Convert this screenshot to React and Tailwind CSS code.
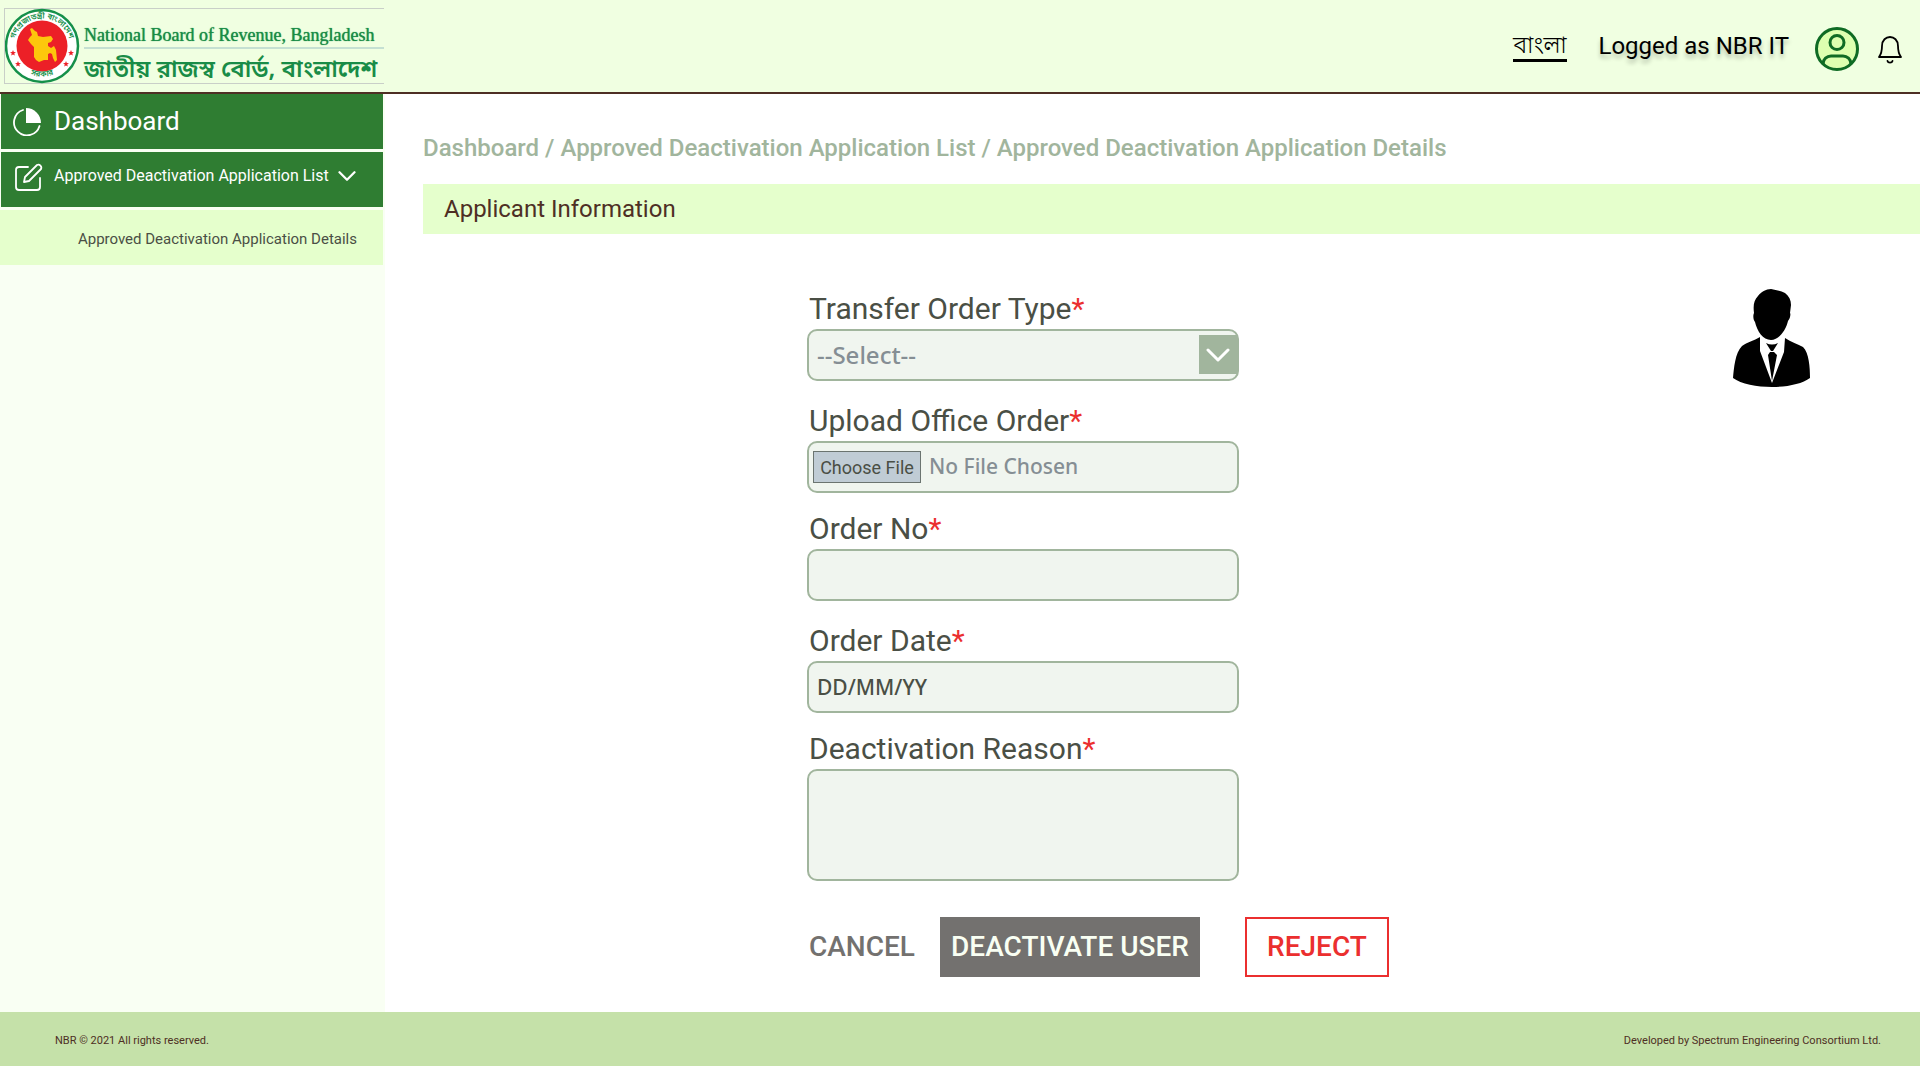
import React, { useState } from "react";

const Emblem = () => (
  <svg viewBox="1 0 76 76" className="w-[76px] h-[76px] shrink-0" aria-hidden="true">
    <defs>
      <path id="sealTop" d="M12.500 50 A28 28 0 1 1 63.500 50" />
      <path id="sealBottom" d="M20 63 A32 32 0 0 0 56 63" />
    </defs>
    <circle cx="38" cy="38" r="36" fill="#fff" stroke="#15904a" strokeWidth="2.5" />
    <circle cx="38" cy="38" r="25.500" fill="#ec2027" />
    <path
      d="M26 21l2-1 3 3 2 1 1 4 5 1 8-1 2 3-2 3-3 1 0 3 3 2 3-2 2 4 1 10-2 2-2-4-1-4-2-1-2 1 0 6-4 0-5 2-3-2-2-3 0-10-3-3-3-4 2-3 2-2z"
      fill="#fdc70c"
    />
    <g fill="#15904a" fontSize="8" fontWeight="600" fontFamily="Noto Sans Bengali, Noto Sans, sans-serif">
      <text>
        <textPath href="#sealTop" startOffset="50%" textAnchor="middle">গণপ্রজাতন্ত্রী বাংলাদেশ</textPath>
      </text>
      <text>
        <textPath href="#sealBottom" startOffset="50%" textAnchor="middle">সরকার</textPath>
      </text>
    </g>
    <g fill="#ec2027">
      {[[9, 45], [14, 56], [67, 45], [62, 56]].map(([x, y]) => (
        <path key={`${x}-${y}`} transform={`translate(${x} ${y})`} d="M0-3l.8 2.1 2.2.1-1.8 1.3.7 2.1L0 1.4l-1.9 1.2.7-2.1L-3-.8l2.2-.1z" />
      ))}
    </g>
  </svg>
);

const Businessman = () => (
  <svg viewBox="0 0 77 98" className="w-[77px] h-[98px]" role="img" aria-label="Applicant">
    <path d="M21 24c-1-8 0-13 4-17 3-4 8-7 13-7 5 1 10 2 14 4 4 3 6 7 6 12l-1 8c1 1 0 6-2 8-2 9-9 19-17 19s-14-9-16-18c-2-2-2-7-1-9z" />
    <path d="M27 48v14l12 32 12-31 1-14c6 4 13 6 18 9 6 6 7 20 7 31-8 6-23 9-38 9S8 95 0 89C1 79 2 64 9 57c5-4 12-5 18-9z" />
    <path d="M33 54c4 2 8 2 12 0l-5 8h-2zM37 63h4l3 3-5 26-4-26z" />
  </svg>
);

const Chevron = ({ className }) => (
  <svg viewBox="0 0 24 14" className={className} fill="none" stroke="currentColor" strokeWidth="3" strokeLinecap="round" strokeLinejoin="round" aria-hidden="true">
    <path d="M2 2l10 10L22 2" />
  </svg>
);

const Header = () => (
  <header className="h-[94px] flex justify-between items-center bg-[#f0ffe1] border-b-2 border-[#4e2f24]">
    <div className="ml-1 h-[76px] w-[380px] flex items-center border-y border-l border-[#c9cfc8]">
      <Emblem />
      <div className="flex-1 pt-3 pl-[3px] text-[#198c47]">
        <p className="pt-2 font-['Liberation_Serif',serif] text-[18px] leading-6 whitespace-nowrap border-b-2 border-[#c5e0d2] [text-shadow:0_0_1px_currentColor]">
          National Board of Revenue, Bangladesh
        </p>
        <p className="pt-1 font-['Noto_Sans_Bengali','Noto_Sans',sans-serif] font-semibold text-[24px] leading-9 whitespace-nowrap">
          জাতীয় রাজস্ব বোর্ড, বাংলাদেশ
        </p>
      </div>
    </div>

    <div className="flex items-center pr-[18px]">
      <a href="#bangla" className="text-[24px] leading-7 font-light border-b-[3px] border-black mr-8">
        বাংলা
      </a>
      <span className="text-[24px] leading-7 mr-[26px] [text-shadow:0_4px_4px_rgba(0,0,0,0.25)]">
        Logged as NBR IT
      </span>
      <button aria-label="Profile" className="mt-1.5 mr-[19px]">
        <svg viewBox="0 0 44 44" className="w-11 h-11" fill="#ddffb0" stroke="#0f6b24" strokeWidth="3">
          <circle cx="22" cy="22" r="20.5" />
          <circle cx="22" cy="15.500" r="7" />
          <path d="M8 37c0-5 4-8 8-8h12c4 0 8 3 8 8" fill="none" />
        </svg>
      </button>
      <button aria-label="Notifications" className="mt-2">
        <svg viewBox="0 0 24 28" className="w-6 h-7" fill="none" stroke="#000" strokeWidth="1.8" strokeLinecap="round" strokeLinejoin="round">
          <path d="M1 21c3-4 3-7 3-11 0-6 4-9 8-9s8 3 8 9c0 4 0 7 3 11z" />
          <path d="M9.500 25c.5 2.200 4.500 2.200 5 0" />
        </svg>
      </button>
    </div>
  </header>
);

const Sidebar = () => (
  <nav className="w-[385px] shrink-0 bg-[#f9fff3] pr-0.5">
    <a href="#dashboard" className="ml-px h-[55px] flex items-center bg-[#2f7d32] text-white text-[26px] pl-3">
      <svg viewBox="0 0 28 28" className="w-7 h-7 mr-[13px]" aria-hidden="true">
        <path d="M10 2a13 13 0 1 0 16.500 16" fill="none" stroke="#fff" strokeWidth="1.800" strokeLinecap="round" />
        <path d="M13 0a15 15 0 0 1 15 15H13z" fill="#fff" />
      </svg>
      Dashboard
    </a>
    <button className="mt-[3px] ml-px w-[382px] h-[55px] flex items-center bg-[#2f7d32] text-white text-[16px] pl-[14px]">
      <svg viewBox="0 0 28 28" className="w-7 h-7 mr-[11px] mb-1.5" fill="none" stroke="#fff" strokeWidth="1.800" strokeLinecap="round" strokeLinejoin="round" aria-hidden="true">
        <path d="M13 4H4a3 3 0 0 0-3 3v17a3 3 0 0 0 3 3h18a3 3 0 0 0 3-3v-9" />
        <path d="M22 2a3 3 0 0 1 4 4L14 18l-5 1 1-5z" />
      </svg>
      <span className="pb-2">Approved Deactivation Application List</span>
      <Chevron className="w-[18px] h-3 ml-[9px] mb-2" />
    </button>
    <a href="#details" className="mt-[3px] h-[55px] flex items-center justify-end pr-[26px] pt-1 bg-[#e5ffcc] text-[#4a4f45] text-[15px]">
      Approved Deactivation Application Details
    </a>
  </nav>
);

const Field = ({ id, label, children }) => (
  <div>
    <label htmlFor={id} className="block pl-0.5 pb-1 text-[30px] leading-8 text-[#4a4f45]">
      {label}
      <span className="text-[#eb2f2f]">*</span>
    </label>
    {children}
  </div>
);

const boxClass =
  "block w-full h-[52px] rounded-[10px] border-2 border-[#a1b59d] bg-[#f0f5ef] px-2 font-['Noto_Sans',sans-serif] font-medium outline-none focus:border-[#2f7d32]";

const DeactivationForm = () => {
  const [orderType, setOrderType] = useState("");
  const [fileName, setFileName] = useState("");
  const [orderNo, setOrderNo] = useState("");
  const [orderDate, setOrderDate] = useState("");
  const [reason, setReason] = useState("");

  return (
    <form onSubmit={(e) => e.preventDefault()} className="pt-1">
      <div className="w-[432px] flex flex-col">
        <Field id="orderType" label="Transfer Order Type">
          <div className="relative">
            <select
              id="orderType"
              value={orderType}
              onChange={(e) => setOrderType(e.target.value)}
              className={`${boxClass} appearance-none text-[24px] text-[#858e94]`}
            >
              <option value="">--Select--</option>
              <option value="transfer">Transfer</option>
              <option value="retirement">Retirement</option>
            </select>
            <span className="pointer-events-none absolute right-0.5 top-1.5 w-[38px] h-[39px] flex items-center justify-center bg-[#a1b59d] text-white">
              <Chevron className="w-6 h-[14px]" />
            </span>
          </div>
        </Field>

        <div className="mt-6">
          <Field id="officeOrder" label="Upload Office Order">
            <div className="flex items-center h-[52px] rounded-[10px] border-2 border-[#a1b59d] bg-[#f0f5ef] pl-1">
              <label
                htmlFor="officeOrder"
                className="h-8 w-[108px] border border-[#6b7470] bg-[#c0ccd5] text-[#4a4f45] text-[18px] leading-8 text-center whitespace-nowrap cursor-pointer"
              >
                Choose File
              </label>
              <input
                id="officeOrder"
                type="file"
                onChange={(e) => setFileName(e.target.files[0]?.name || "")}
                className="sr-only"
              />
              <span className="pl-2 font-['Noto_Sans',sans-serif] font-medium text-[21px] text-[#858e94]">
                {fileName || "No File Chosen"}
              </span>
            </div>
          </Field>
        </div>

        <div className="mt-5">
          <Field id="orderNo" label="Order No">
            <input id="orderNo" type="text" value={orderNo} onChange={(e) => setOrderNo(e.target.value)} className={`${boxClass} text-[21px]`} />
          </Field>
        </div>

        <div className="mt-6">
          <Field id="orderDate" label="Order Date">
            <input
              id="orderDate"
              type="text"
              placeholder="DD/MM/YY"
              value={orderDate}
              onChange={(e) => setOrderDate(e.target.value)}
              className={`${boxClass} text-[21px] text-[#4a4f45] placeholder:text-[#4a4f45]`}
            />
          </Field>
        </div>

        <div className="mt-5">
          <Field id="reason" label="Deactivation Reason">
            <textarea
              id="reason"
              value={reason}
              onChange={(e) => setReason(e.target.value)}
              className="block w-full h-28 resize-none rounded-[10px] border-2 border-[#a1b59d] bg-[#f0f5ef] p-2 text-[21px] outline-none focus:border-[#2f7d32]"
            />
          </Field>
        </div>
      </div>

      {/* Actions */}
      <div className="mt-9 flex items-center text-[28px] font-medium whitespace-nowrap">
        <button type="reset" className="pl-0.5 w-[133px] text-left text-[#73716f]">
          CANCEL
        </button>
        <button type="submit" className="w-[260px] h-[60px] bg-[#73716f] text-[#f9fff3]">
          DEACTIVATE USER
        </button>
        <button type="button" className="ml-[45px] w-36 h-[60px] border-2 border-[#eb2f2f] text-[#eb2f2f]">
          REJECT
        </button>
      </div>
    </form>
  );
};

const App = () => {
  return (
    <div className="min-h-screen flex flex-col bg-white font-['Roboto','Noto_Sans_Bengali',sans-serif]">
      <Header />

      <div className="flex-1 flex">
        <Sidebar />
        <main className="flex-1 pl-[38px] pt-9 pb-8">
          <p className="text-[24px] leading-9 font-medium text-[#a1b59d]">
            <a href="#dashboard">Dashboard</a> / <a href="#list">Approved Deactivation Application List</a> /{" "}
            <a href="#details">Approved Deactivation Application Details</a>
          </p>
          <h1 className="mt-[18px] h-[50px] pl-[21px] bg-[#e5ffcc] text-[24px] leading-[50px] text-[#4e2f24]">
            Applicant Information
          </h1>

          <div className="mt-[55px] ml-[20vw] flex justify-between items-start">
            <DeactivationForm />
            <div className="mr-[110px]">
              <Businessman />
            </div>
          </div>
        </main>
      </div>

      <footer className="h-[54px] pt-1 pl-[55px] pr-[39px] flex items-center justify-between bg-[#c5e1a9] text-[11px] text-[#4e2f24]">
        <p>NBR © 2021 All rights reserved.</p>
        <p>Developed by Spectrum Engineering Consortium Ltd.</p>
      </footer>
    </div>
  );
};

export default App;
